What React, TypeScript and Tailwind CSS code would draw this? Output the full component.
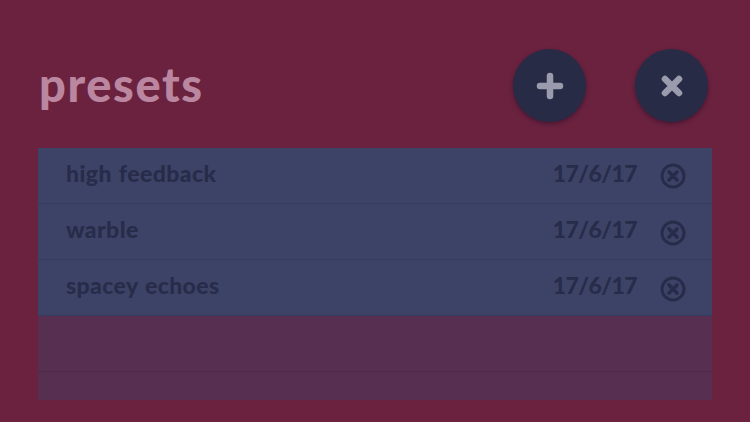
const presets = [
  { name: "high feedback", date: "17/6/17", iconClass: "mt-[1px]" },
  { name: "warble", date: "17/6/17", iconClass: "mt-[3px]" },
  { name: "spacey echoes", date: "17/6/17", iconClass: "mt-[3px]" },
]

const RemoveIcon = ({ className }: { className: string }) => (
  <svg viewBox="0 0 26 26" className={className} fill="none" stroke="#272c4a" strokeLinecap="round">
    <circle cx="13" cy="13" r="11" strokeWidth="3" />
    <path d="M9 9l8 8M17 9l-8 8" strokeWidth="3.6" />
  </svg>
)

const RoundButton = ({ path }: { path: string }) => (
  <button className="flex h-[73px] w-[73px] items-center justify-center rounded-full bg-[#272b45] shadow-[0_2px_4px_rgba(40,15,40,0.55)]">
    <svg viewBox="0 0 28 28" className="h-7 w-7" fill="none" stroke="#9a9cad" strokeWidth="6.5" strokeLinecap="round">
      <path d={path} />
    </svg>
  </button>
)

const App = () => {
  return (
    <div className="flex h-[422px] w-[750px] flex-col overflow-hidden bg-[#6a223f] pt-[49px] font-['Lato',sans-serif]">
      <div className="flex h-[73px] items-center pl-[39px] pr-[42px]">
        <h1 className="mb-[3px] flex-1 text-[47px] leading-none font-black tracking-[1.6px] text-[#bb87a0]">presets</h1>
        <div className="flex gap-[49px]">
          <RoundButton path="M14 4v20M4 14h20" />
          <RoundButton path="M7 7l14 14M21 7L7 21" />
        </div>
      </div>
      <div className="mx-[38px] mt-[26px] flex h-[252px] flex-col overflow-hidden bg-[#572f50]">
        {presets.map((preset) => (
          <div
            key={preset.name}
            className="flex h-[56px] shrink-0 items-center border-b border-[#373b60] bg-[#3d4366] pl-[28px] pr-[26px] text-[23px] font-black text-[#272c4a]"
          >
            <span className="mb-[4px] flex-1 tracking-[0.4px] [word-spacing:1px]">{preset.name}</span>
            <span className="mr-[23px] mb-[4px] tracking-[-0.6px]">{preset.date}</span>
            <RemoveIcon className={`h-[26px] w-[26px] ${preset.iconClass}`} />
          </div>
        ))}
        <div className="h-[56px] shrink-0 border-b border-[#4d2a4a]" />
      </div>
    </div>
  )
}

export default App
